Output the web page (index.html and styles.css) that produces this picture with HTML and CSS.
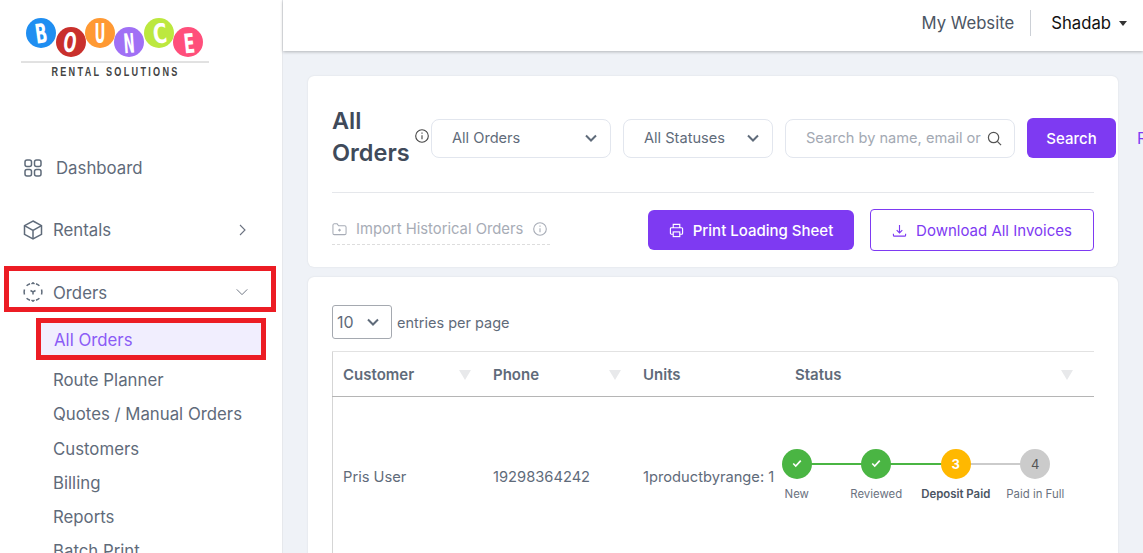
FILE: index.html
```html
<!DOCTYPE html>
<html lang="en">
<head>
  <meta charset="UTF-8">
  <title>All Orders</title>
  <link rel="stylesheet" href="styles.css">
</head>
<body>
  <div class="app-container">
    <!-- Sidebar -->
    <div class="sidebar">
      <div class="logo">
        <svg width="200" height="80" viewBox="0 0 200 80">
          <circle cx="21" cy="33" r="15" fill="#1f8ef1"/>
          <circle cx="51" cy="42" r="15" fill="#c9302c"/>
          <circle cx="80" cy="33" r="15" fill="#ff9933"/>
          <circle cx="109" cy="42" r="15" fill="#a070f5"/>
          <circle cx="139" cy="33" r="15" fill="#bce83f"/>
          <circle cx="168" cy="42" r="15" fill="#ff4f7b"/>
          <g class="logo-letters">
            <text x="21" y="43" textLength="12" lengthAdjust="spacingAndGlyphs" transform="rotate(-8 21 33)">B</text>
            <text x="50" y="52" textLength="13" lengthAdjust="spacingAndGlyphs" transform="rotate(8 50 42)">O</text>
            <text x="80" y="43" textLength="11" lengthAdjust="spacingAndGlyphs">U</text>
            <text x="109" y="53" textLength="11" lengthAdjust="spacingAndGlyphs" transform="rotate(-4 109 42)">N</text>
            <text x="140" y="43" textLength="14" lengthAdjust="spacingAndGlyphs" transform="rotate(-6 140 33)">C</text>
            <text x="169" y="53" textLength="11" lengthAdjust="spacingAndGlyphs" transform="rotate(-6 169 42)">E</text>
          </g>
          <line x1="1" y1="62" x2="189" y2="62" stroke="#c4c4c4"/>
          <text class="logo-sub" transform="translate(95.500 76) scale(.76 1)">RENTAL SOLUTIONS</text>
        </svg>
      </div>

      <ul class="nav-menu">
        <li class="nav-item">
          <svg class="nav-icon" viewBox="0 0 20 20"><rect x="2" y="2" width="6.500" height="6.500" rx="2"/><rect x="11.500" y="2" width="6.500" height="6.500" rx="2"/><rect x="2" y="11.500" width="6.500" height="6.500" rx="2"/><rect x="11.500" y="11.500" width="6.500" height="6.500" rx="2"/></svg>
          <span class="nav-label dash-label">Dashboard</span>
        </li>
        <li class="nav-item">
          <svg class="nav-icon" viewBox="0 0 20 20"><path d="M10 1l8.500 4.700v8.600L10 19l-8.500-4.700V5.700z"/><path d="M1.500 5.700L10 10.500l8.500-4.800M10 10.500V19"/></svg>
          <span class="nav-label">Rentals</span>
          <svg class="nav-arrow" viewBox="0 0 12 12"><path d="M4 1l5 5-5 5"/></svg>
        </li>
        <li class="nav-item marked">
          <svg class="nav-icon" viewBox="0 0 20 20"><path d="M7 1.700A9 9 0 0 0 3.600 3.700M1.500 7.500A9 9 0 0 0 1.500 12.500M3.600 16.300A9 9 0 0 0 7 18.300M13 18.300A9 9 0 0 0 16.400 16.300M18.500 12.500A9 9 0 0 0 18.500 7.500M16.400 3.700A9 9 0 0 0 13 1.700"/><path d="M8.500 2L10 .8 11.500 2M8.500 18L10 19.200 11.500 18M7.500 8.500L10 10l2.500-1.500M10 10v2.500"/></svg>
          <span class="nav-label orders-label">Orders</span>
          <svg class="nav-arrow" viewBox="0 0 16 12"><path d="M2 3l6 6 6-6"/></svg>
        </li>
      </ul>

      <ul class="sub-menu">
        <li class="sub-item active">All Orders</li>
        <li class="sub-item">Route Planner</li>
        <li class="sub-item">Quotes / Manual Orders</li>
        <li class="sub-item">Customers</li>
        <li class="sub-item">Billing</li>
        <li class="sub-item">Reports</li>
        <li class="sub-item">Batch Print</li>
      </ul>
    </div>

    <!-- Main -->
    <div class="main-content">
      <div class="topbar">
        <span class="site-link">My Website</span>
        <span class="user-menu">Shadab <i class="caret"></i></span>
      </div>

      <div class="page">
        <div class="card filter-card">
          <div class="filter-row">
            <h1 class="page-title">All Orders</h1>
            <svg class="info-icon title-info" viewBox="0 0 14 14"><circle cx="7" cy="7" r="6.300"/><path d="M7 6.200v4M7 3.600v1.200"/></svg>
            <div class="select-box orders-select">All Orders
              <svg class="select-arrow" viewBox="0 0 12 8"><path d="M1 1.500l5 5 5-5"/></svg>
            </div>
            <div class="select-box status-select">All Statuses
              <svg class="select-arrow" viewBox="0 0 12 8"><path d="M1 1.500l5 5 5-5"/></svg>
            </div>
            <div class="search-box">
              <span class="search-text">Search by name, email or</span>
              <svg class="search-icon" viewBox="0 0 16 16"><circle cx="7" cy="7" r="5.500"/><path d="M11 11l4 4"/></svg>
            </div>
            <button class="btn btn-solid search-btn">Search</button>
            <span class="reset-link">Reset</span>
          </div>

          <div class="action-row">
            <div class="import-link">
              <svg class="folder-icon" viewBox="0 0 16 14"><path d="M1 3a1.500 1.500 0 0 1 1.500-1.500h3l1.500 2h6.500A1.500 1.500 0 0 1 15 5v6.500a1.500 1.500 0 0 1-1.500 1.500h-11A1.500 1.500 0 0 1 1 11.500z"/><path d="M6.500 8.200h3M8 6.700v3"/></svg>
              <span>Import Historical Orders</span>
              <svg class="info-icon" viewBox="0 0 14 14"><circle cx="7" cy="7" r="6.300"/><path d="M7 6.200v4M7 3.600v1.200"/></svg>
            </div>
            <button class="btn btn-solid print-btn">
              <svg class="btn-icon" viewBox="0 0 16 16"><path d="M4.500 5V1.500h7V5M4.500 12H2.500a1 1 0 0 1-1-1V6a1 1 0 0 1 1-1h11a1 1 0 0 1 1 1v5a1 1 0 0 1-1 1h-2"/><rect x="4.500" y="9.500" width="7" height="5"/></svg>
              Print Loading Sheet
            </button>
            <button class="btn btn-outline">
              <svg class="btn-icon" viewBox="0 0 16 16"><path d="M8 2v8M5 7.500L8 10.500l3-3M1.500 11.500V13a1 1 0 0 0 1 1h11a1 1 0 0 0 1-1v-1.500"/></svg>
              Download All Invoices
            </button>
          </div>
        </div>

        <div class="card table-card">
          <div class="entries-row">
            <div class="entries-select">10
              <svg class="select-arrow" viewBox="0 0 12 8"><path d="M1 1.500l5 5 5-5"/></svg>
            </div>
            <span>entries per page</span>
          </div>

          <table class="orders-table">
            <thead>
              <tr>
                <th class="col-customer">Customer<i class="sort"></i></th>
                <th class="col-phone">Phone<i class="sort"></i></th>
                <th class="col-units">Units</th>
                <th class="col-status">Status<i class="sort"></i></th>
              </tr>
            </thead>
            <tbody>
              <tr>
                <td>Pris User</td>
                <td>19298364242</td>
                <td class="units-cell">1productbyrange: 1</td>
                <td class="status-cell">
                  <div class="stepper">
                    <div class="step done">
                      <span class="step-dot"><svg viewBox="0 0 12 10"><path d="M1.500 5l3 3 6-6.500"/></svg></span>
                      <span class="step-label">New</span>
                    </div>
                    <div class="step done">
                      <span class="step-dot"><svg viewBox="0 0 12 10"><path d="M1.500 5l3 3 6-6.500"/></svg></span>
                      <span class="step-label">Reviewed</span>
                    </div>
                    <div class="step current">
                      <span class="step-dot">3</span>
                      <span class="step-label">Deposit Paid</span>
                    </div>
                    <div class="step todo">
                      <span class="step-dot">4</span>
                      <span class="step-label">Paid in Full</span>
                    </div>
                  </div>
                </td>
              </tr>
            </tbody>
          </table>
        </div>
      </div>
    </div>
  </div>
</body>
</html>
```

FILE: styles.css
```css
body, html {
  margin: 0;
  padding: 0;
  height: 100%;
  font-family: Inter, "Liberation Sans", sans-serif;
  overflow: hidden;
}

.app-container {
  display: flex;
  height: 100vh;
  overflow: hidden;
}

/* Sidebar */
.sidebar {
  width: 282px;
  flex-shrink: 0;
  background-color: #fff;
  border-right: 1px solid #e6e8ec;
  color: #5f6b7a;
  font-size: 16.800px;
  overflow: hidden;
}

.logo {
  height: 137px;
  padding-left: 20px;
}

.logo svg {
  display: block;
}

.logo-letters text {
  font-family: "DejaVu Sans", sans-serif;
  font-size: 27px;
  font-weight: bold;
  fill: #fff;
  text-anchor: middle;
}

.logo-sub {
  font-family: "Liberation Sans", sans-serif;
  font-size: 12px;
  font-weight: bold;
  letter-spacing: 3px;
  fill: #444;
  text-anchor: middle;
}

.nav-menu, .sub-menu {
  list-style: none;
  margin: 0;
  padding: 0;
}

.nav-item {
  position: relative;
  display: flex;
  align-items: center;
  height: 62px;
  padding-left: 23px;
}

.nav-icon {
  width: 20px;
  height: 20px;
  margin-right: 10px;
  fill: none;
  stroke: #5f6b7a;
  stroke-width: 1.500;
}

.nav-label {
  flex: 1;
}

.dash-label {
  padding-left: 3px;
}

.orders-label {
  padding-top: 2px;
}

.nav-arrow {
  width: 14px;
  height: 12px;
  margin-right: 33px;
  fill: none;
  stroke: #6b7280;
  stroke-width: 1.100;
}

.marked::after {
  content: "";
  position: absolute;
  left: 4px;
  top: 5px;
  width: 272px;
  height: 46px;
  box-sizing: border-box;
  border: 5px solid #ec1c24;
}

.sub-item {
  height: 34.300px;
  line-height: 34.300px;
  margin-left: 53px;
}

.sub-item.active {
  position: relative;
  height: 34px;
  line-height: 34px;
  margin: 0 21px 6px 41px;
  padding-left: 13px;
  background-color: #f1eefe;
  color: #8b5cf6;
}

.sub-item.active::after {
  content: "";
  position: absolute;
  left: -5px;
  top: -5px;
  right: -5px;
  bottom: -3px;
  border: 5px solid #ec1c24;
}

/* Main */
.main-content {
  flex: 1;
  min-width: 0;
  display: flex;
  flex-direction: column;
  background-color: #eff2f7;
}

.topbar {
  flex-shrink: 0;
  height: 51px;
  box-sizing: border-box;
  display: flex;
  align-items: center;
  justify-content: flex-end;
  padding: 0 16px 5px 0;
  background-color: #fff;
  box-shadow: 0 1px 3px rgba(0, 0, 0, 0.25);
  font-size: 16.700px;
}

.site-link {
  color: #4b5563;
  padding-right: 16px;
  border-right: 1px solid #ccd0d6;
  line-height: 26px;
}

.user-menu {
  color: #111;
  padding-left: 20px;
  display: flex;
  align-items: center;
}

.caret {
  width: 0;
  height: 0;
  margin-left: 8px;
  border-left: 4px solid transparent;
  border-right: 4px solid transparent;
  border-top: 5px solid #333;
}

.page {
  padding: 25px;
  display: flex;
  flex-direction: column;
  gap: 10px;
}

.card {
  box-sizing: border-box;
  width: 810px;
  background-color: #fff;
  border-radius: 6px;
  box-shadow: 0 0 2px rgba(0, 0, 0, 0.1);
  padding: 0 24px;
}

.filter-card {
  height: 191px;
}

.filter-row {
  display: flex;
  align-items: center;
  height: 108px;
  padding-top: 8px;
  border-bottom: 1px solid #e5e7eb;
  white-space: nowrap;
}

.page-title {
  width: 80px;
  flex-shrink: 0;
  margin: -2px 0 0;
  font-size: 23.500px;
  font-weight: 600;
  line-height: 32px;
  color: #404a5a;
  white-space: normal;
}

.info-icon {
  width: 14px;
  height: 14px;
  flex-shrink: 0;
  fill: none;
  stroke: currentColor;
  stroke-width: 1.100;
}

.title-info {
  color: #444;
  margin: -4px 2px 0 3px;
}

.select-box, .search-box {
  position: relative;
  box-sizing: border-box;
  height: 39px;
  flex-shrink: 0;
  display: flex;
  align-items: center;
  border: 1px solid #e2e6ee;
  border-radius: 8px;
  font-size: 14.600px;
  color: #5f6b7a;
  padding-left: 20px;
}

.orders-select {
  width: 180px;
  margin-right: 12px;
}

.status-select {
  width: 150px;
  margin-right: 12px;
}

.select-arrow {
  width: 12px;
  height: 8px;
  margin-left: auto;
  margin-right: 13px;
  fill: none;
  stroke: #5f6b7a;
  stroke-width: 2;
}

.search-box {
  width: 230px;
  margin-right: 12px;
}

.search-text {
  color: #a3a9b3;
}

.search-icon {
  position: absolute;
  right: 12px;
  top: 11px;
  width: 15px;
  height: 15px;
  fill: none;
  stroke: #555;
  stroke-width: 1.300;
}

.btn {
  box-sizing: border-box;
  display: flex;
  align-items: center;
  justify-content: center;
  flex-shrink: 0;
  font-family: inherit;
  font-size: 15px;
  font-weight: 500;
  border-radius: 6px;
  cursor: pointer;
}

.btn-solid {
  background-color: #7e3af2;
  border: none;
  color: #fff;
}

.btn-outline {
  width: 224px;
  height: 42px;
  background-color: #fff;
  border: 1px solid #7e3af2;
  border-radius: 4px;
  color: #7e3af2;
  font-weight: 400;
}

.search-btn {
  width: 89px;
  height: 40px;
  margin-right: 21px;
}

.reset-link {
  color: #7e3af2;
  font-size: 16px;
}

.btn-icon {
  width: 15px;
  height: 15px;
  margin-right: 9px;
  fill: none;
  stroke: currentColor;
  stroke-width: 1.200;
}

.action-row {
  display: flex;
  align-items: center;
  height: 74px;
}

.import-link {
  display: flex;
  align-items: center;
  width: 218px;
  height: 30px;
  padding-bottom: 2px;
  border-bottom: 1px dashed #ddd;
  margin-right: 98px;
  box-sizing: border-box;
  color: #a7acb6;
  font-size: 14.800px;
  white-space: nowrap;
}

.folder-icon {
  width: 15px;
  height: 14px;
  margin-right: 9px;
  fill: none;
  stroke: currentColor;
  stroke-width: 1.100;
}

.import-link .info-icon {
  margin-left: 10px;
}

.print-btn {
  width: 206px;
  height: 40px;
  margin-right: 16px;
}

/* Table */
.table-card {
  height: 400px;
}

.entries-row {
  display: flex;
  align-items: center;
  gap: 5px;
  padding-top: 28px;
  font-size: 14.500px;
  color: #5f6b7a;
}

.entries-select {
  box-sizing: border-box;
  display: flex;
  align-items: center;
  width: 60px;
  height: 34px;
  padding-left: 4px;
  border: 1px solid #a5a9b0;
  border-radius: 3px;
  font-size: 16px;
}

.entries-select .select-arrow {
  margin-right: 12px;
}

.orders-table {
  width: 762px;
  margin-top: 12px;
  border-collapse: collapse;
  table-layout: fixed;
  border-top: 1px solid #e2e2e2;
  border-left: 1px solid #d5d5d5;
  color: #5f6b7a;
  font-size: 14.700px;
}

.orders-table th {
  position: relative;
  height: 44px;
  padding: 0 0 0 10px;
  border-bottom: 1px solid #b5b5b5;
  text-align: left;
  font-size: 15px;
  font-weight: 600;
}

.sort {
  position: absolute;
  top: 18px;
  right: 12px;
  width: 0;
  height: 0;
  border-left: 6px solid transparent;
  border-right: 6px solid transparent;
  border-top: 10px solid #e8e9eb;
}

.col-customer, .col-phone {
  width: 140px;
}

.col-units {
  width: 142px;
}

.col-status .sort {
  right: 21px;
}

.orders-table td {
  height: 156px;
  padding: 2px 0 0 10px;
  white-space: nowrap;
  vertical-align: middle;
}

.orders-table td.status-cell {
  padding: 0;
}

.stepper {
  display: flex;
  margin: -3px 0 0 -28px;
}

.step {
  position: relative;
  width: 79.500px;
  display: flex;
  flex-direction: column;
  align-items: center;
  gap: 8px;
}

/* connector to the next step */
.step::after {
  content: "";
  position: absolute;
  top: 14px;
  left: 50%;
  width: 100%;
  height: 2px;
  background-color: #4ab543;
}

.step.current::after {
  background-color: #cbcbcb;
}

.step.todo::after {
  display: none;
}

.step-dot {
  position: relative;
  z-index: 1;
  display: flex;
  align-items: center;
  justify-content: center;
  width: 30px;
  height: 30px;
  border-radius: 50%;
  font-size: 13px;
}

.step-dot svg {
  width: 10px;
  height: 9px;
  fill: none;
  stroke: #fff;
  stroke-width: 2;
}

.done .step-dot {
  background-color: #4ab543;
}

.current .step-dot {
  background-color: #ffb800;
  color: #fff;
  font-weight: 700;
}

.todo .step-dot {
  background-color: #cbcbcb;
  color: #555;
}

.step-label {
  font-size: 11.400px;
  color: #6b7280;
  white-space: nowrap;
}

.current .step-label {
  font-weight: 600;
  color: #4b5563;
}
```
